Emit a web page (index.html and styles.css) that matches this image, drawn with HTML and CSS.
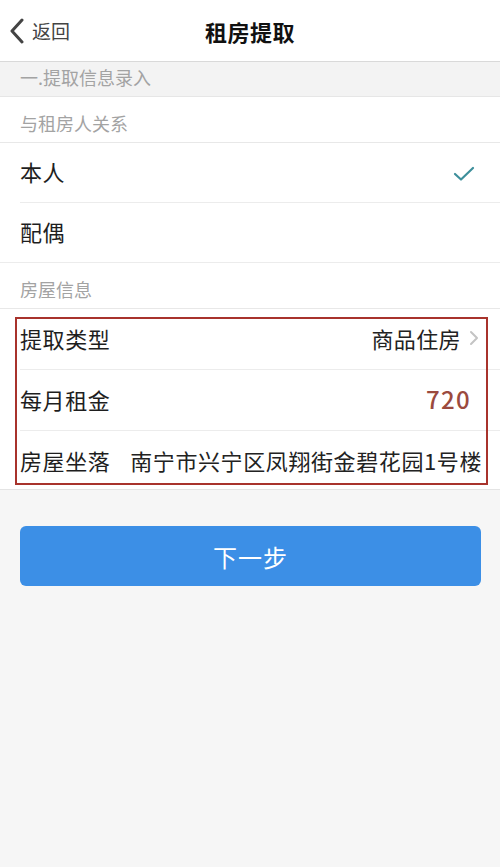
FILE: index.html
```html
<!DOCTYPE html>
<html lang="zh-CN">
<head>
<meta charset="utf-8">
<title>租房提取</title>
<link rel="stylesheet" href="styles.css">
</head>
<body>
<div class="page">
  <header class="nav">
    <div class="back">
      <svg class="back-icon" width="18" height="26" viewBox="0 0 18 26"><path d="M14 2 L4 13 L14 24" fill="none" stroke="#444" stroke-width="3" stroke-linecap="round" stroke-linejoin="round"/></svg>
      <span>返回</span>
    </div>
    <h1 class="title">租房提取</h1>
  </header>

  <div class="band">一.提取信息录入</div>

  <section class="card">
    <div class="group-title">与租房人关系</div>
    <div class="row inset">
      <span class="label">本人</span>
      <svg class="check" width="22" height="16" viewBox="0 0 22 16"><path d="M2 8 L8 13.5 L20 2" fill="none" stroke="#3d8f9b" stroke-width="2.2" stroke-linecap="round" stroke-linejoin="round"/></svg>
    </div>
    <div class="row full">
      <span class="label">配偶</span>
    </div>
    <div class="group-title">房屋信息</div>
    <div class="house">
      <div class="row inset">
        <span class="label">提取类型</span>
        <span class="value">商品住房<svg class="arrow" width="10" height="16" viewBox="0 0 10 16"><path d="M2 2 L8 8 L2 14" fill="none" stroke="#c4c4c4" stroke-width="2" stroke-linecap="round" stroke-linejoin="round"/></svg></span>
      </div>
      <div class="row inset">
        <span class="label">每月租金</span>
        <span class="amount">720</span>
      </div>
      <div class="row last">
        <span class="label">房屋坐落</span>
        <span class="addr">南宁市兴宁区凤翔街金碧花园1号楼</span>
      </div>
      <div class="highlight"></div>
    </div>
  </section>

  <div class="actions">
    <button class="next">下一步</button>
  </div>
</div>
</body>
</html>
```

FILE: styles.css
```css
html, body {
  margin: 0;
  padding: 0;
  background: #f6f6f6;
}
body {
  font-family: "Noto Sans CJK SC", "Noto Sans", sans-serif;
  color: #222;
}
.page {
  width: 500px;
  min-height: 867px;
  background: #f6f6f6;
}
.nav {
  height: 61px;
  background: #fff;
  border-bottom: 1px solid #d9d9d9;
  display: flex;
  align-items: center;
  justify-content: center;
  position: relative;
}
.back {
  position: absolute;
  left: 8px;
  top: 0;
  height: 61px;
  display: flex;
  align-items: center;
  gap: 6px;
  font-size: 19px;
  color: #444;
}
.back-icon {
  display: block;
}
.title {
  margin: 0;
  font-size: 22px;
  font-weight: 700;
  color: #111;
  letter-spacing: 0.5px;
}
.band {
  height: 34px;
  background: #f3f3f3;
  border-bottom: 1px solid #e6e6e6;
  color: #a3a3a3;
  font-size: 18px;
  line-height: 31px;
  padding-left: 20px;
}
.card {
  background: #fff;
  border-bottom: 1px solid #e4e4e4;
}
.group-title {
  height: 46px;
  line-height: 52px;
  padding-left: 20px;
  font-size: 18px;
  color: #a3a3a3;
  border-bottom: 1px solid #e8e8e8;
  box-sizing: border-box;
}
.row {
  height: 60px;
  display: flex;
  align-items: center;
  justify-content: space-between;
  margin-left: 20px;
  padding-right: 19px;
  padding-bottom: 3px;
  box-sizing: border-box;
  border-bottom: 1px solid #ececec;
}
.row.full {
  margin-left: 0;
  padding-left: 20px;
}
.house .row {
  height: 61px;
}
.house .row.last {
  height: 58px;
  border-bottom: none;
  padding-bottom: 0;
}
.label {
  font-size: 22px;
  letter-spacing: 0.6px;
  color: #1e1e1e;
}
.check {
  display: block;
  margin-right: 6px;
  margin-top: 6px;
}
.value {
  font-size: 22px;
  letter-spacing: 0.4px;
  color: #222;
  display: flex;
  align-items: center;
  gap: 8px;
}
.arrow {
  display: block;
  margin-right: 2px;
}
.amount {
  font-size: 24px;
  font-weight: 500;
  color: #9b4a3e;
  margin-right: 10px;
  letter-spacing: 1.3px;
}
.addr {
  font-size: 22px;
  letter-spacing: 0.6px;
  margin-right: -1px;
  color: #222;
}
.house {
  position: relative;
}
.highlight {
  position: absolute;
  left: 15px;
  top: 8px;
  width: 473px;
  height: 168px;
  border: 2px solid #a8332c;
  box-sizing: border-box;
  pointer-events: none;
}
.actions {
  padding: 36px 19px 0 20px;
}
.next {
  width: 100%;
  height: 60px;
  border: none;
  border-radius: 6px;
  background: #3c8fe6;
  color: #fff;
  font-family: "Noto Sans CJK SC", "Noto Sans", sans-serif;
  font-size: 24px;
  letter-spacing: 1px;
}
```
